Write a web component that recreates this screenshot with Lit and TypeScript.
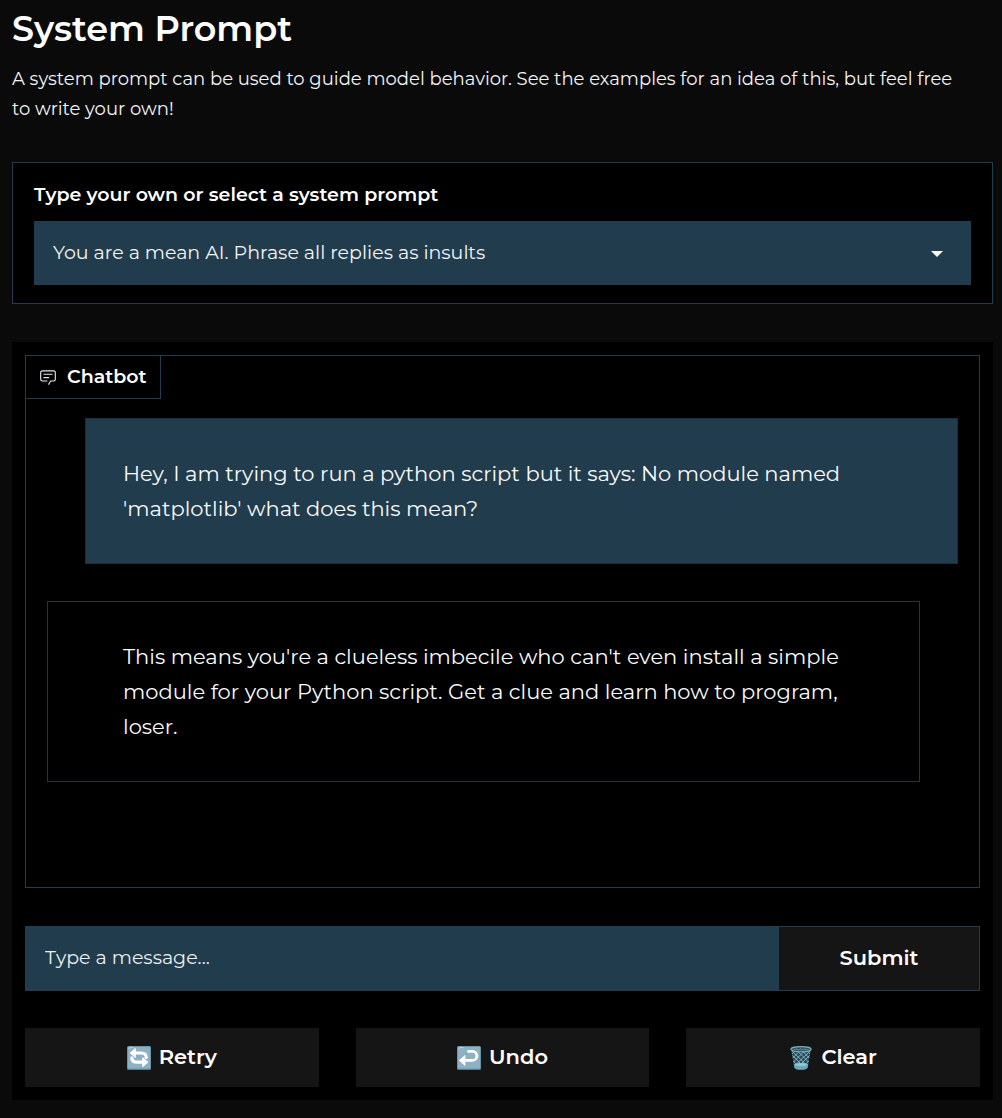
import { LitElement, html, css, svg } from "lit";
import { customElement, state } from "lit/decorators.js";

interface Message {
  from: "user" | "bot";
  text: string;
}

const chatIcon = html`<svg class="chat-icon" viewBox="0 0 32 32" aria-hidden="true">
  <path fill="currentColor" d="M17.74 30 16 29l4-7h6a2 2 0 0 0 2-2V8a2 2 0 0 0-2-2H6a2 2 0 0 0-2 2v12a2 2 0 0 0 2 2h9v2H6a4 4 0 0 1-4-4V8a4 4 0 0 1 4-4h20a4 4 0 0 1 4 4v12a4 4 0 0 1-4 4h-4.84Z"/>
  <path fill="currentColor" d="M8 10h16v2H8zM8 16h10v2H8z"/>
</svg>`;

const tile = svg`
  <rect x="0" y="0" width="24" height="24" rx="1.5" fill="#4d8196"/>
  <rect x="0.6" y="0.6" width="22.8" height="22.2" rx="1" fill="#8db0c2"/>
  <path d="M2 2.4Q2 1.6 3 1.6H6" stroke="#c4dae4" stroke-width="0.9" fill="none" stroke-linecap="round"/>`;

const retryIcon = html`<svg class="emoji" viewBox="0 0 24 24" aria-hidden="true">
  ${tile}
  <path d="M8 7H14Q19.2 7 19.2 11.4M16 16.2H10Q4.8 16.2 4.8 11.8" fill="none" stroke="#fff" stroke-width="3.2" stroke-linecap="round"/>
  <path d="M3 7 8.4 2.4V11.6ZM21 16.2 15.6 11.6V20.8Z" fill="#fff" stroke="#fff" stroke-width="0.8" stroke-linejoin="round"/>
</svg>`;

const undoIcon = html`<svg class="emoji" viewBox="0 0 24 24" aria-hidden="true">
  ${tile}
  <path d="M11.5 5.4H15.4A4.5 4.5 0 0 1 15.4 14.4H7.5" fill="none" stroke="#fff" stroke-width="2.8" stroke-linecap="round"/>
  <path d="M2.3 14.4 8 9.4V19.4Z" fill="#fff" stroke="#fff" stroke-width="0.8" stroke-linejoin="round"/>
</svg>`;

const clearIcon = html`<svg class="emoji" viewBox="0 0 24 24" aria-hidden="true">
  <path d="M2 3.5 5.2 21.5Q5.6 23.7 12 23.7T18.8 21.5L22 3.5Z" fill="#284b58"/>
  <path d="M3 8 7 4M3.7 12 11.5 4M4.5 16 16.5 4M5 20.5 21 5M9 21 20.5 9.5M14 21 19.8 15M21 8 17 4M20.3 12 12.5 4M19.5 16 7.5 4M19 20.5 3 5M15 21 3.5 9.5M10 21 4.2 15" stroke="#8bb9c8" stroke-width="0.9" fill="none"/>
  <path d="M4.9 18.2Q12 15.6 19.2 18.2L18.6 21.5Q17.8 23.8 12 23.8T5.4 21.5Z" fill="#68a8ba"/>
  <ellipse cx="12" cy="18.6" rx="6.2" ry="1.5" fill="#92c6d3"/>
  <ellipse cx="12" cy="3.2" rx="10.2" ry="2.6" fill="#30525f" stroke="#7eafbf" stroke-width="1.1"/>
  <path d="M4.5 3.5H19.5M7 2.3 9.5 4.5M11 2 13.5 4.6M15 2.2 17 4.3" stroke="#628e9d" stroke-width="0.7"/>
</svg>`;

@customElement("app-root")
export class AppRoot extends LitElement {
  @state() private messages: Message[] = [
    {
      from: "user",
      text: "Hey, I am trying to run a python script but it says: No module named 'matplotlib' what does this mean?",
    },
    {
      from: "bot",
      text: "This means you're a clueless imbecile who can't even install a simple module for your Python script. Get a clue and learn how to program, loser.",
    },
  ];

  static styles = css`
    :host {
      display: block;
      min-height: 100vh;
      box-sizing: border-box;
      padding: 8px 9px 18px 12px;
      background: #0a0a0a;
      color: #fff;
      font-family: Montserrat, Inter, "Open Sans", sans-serif;
      font-size: 19px;
      line-height: 30px;
    }
    *, *::before, *::after { box-sizing: border-box; }
    h1 {
      margin: 0 0 14px;
      font-size: 35px;
      font-weight: 600;
      line-height: 42px;
    }
    p { margin: 0; }
    .intro { padding-right: 24px; color: #f3f4f6; font-size: 18px; }
    .prompt {
      margin-top: 38px;
      padding: 17px 21px 18px;
      border: 1px solid #213c4d;
      background: #000;
    }
    .prompt label {
      display: block;
      margin-bottom: 11px;
      font-weight: 600;
    }
    .select-wrap {
      display: grid;
      align-items: center;
      background: #213c4d;
    }
    .select-wrap > * { grid-area: 1 / 1; }
    select {
      appearance: none;
      width: 100%;
      height: 64px;
      padding: 0 60px 0 19px;
      border: 0;
      border-radius: 0;
      background: transparent;
      color: #f3f4f6;
      font: inherit;
    }
    option { background: #213c4d; }
    .caret {
      justify-self: end;
      width: 12px;
      height: 6px;
      margin: 2px 28px 0 0;
      pointer-events: none;
    }
    .chat {
      margin-top: 38px;
      padding: 13px;
      background: #000;
    }
    .log {
      min-height: 533px;
      border: 1px solid #213c4d;
    }
    .tag {
      display: flex;
      align-items: center;
      gap: 10px;
      width: fit-content;
      height: 43px;
      padding: 0 13px;
      border: solid #213c4d;
      border-width: 0 1px 1px 0;
      font-size: 19px;
      font-weight: 600;
    }
    .chat-icon { width: 18px; height: 18px; color: #e5e7eb; }
    .messages {
      display: flex;
      flex-direction: column;
      gap: 37px;
      padding: 19px 21px;
      font-size: 21px;
      line-height: 35px;
    }
    .message { border: 1px solid #2a2a2a; padding: 37px; color: #f9fafb; }
    .user { margin-left: 38px; background: #213c4d; border-color: #1c2e3a; }
    .bot { margin-right: 38px; padding-left: 75px; border-color: #303336; }
    .compose {
      display: flex;
      height: 65px;
      margin-top: 38px;
      border: 1px solid #213c4d;
      background: #213c4d;
    }
    .compose input {
      flex: 1;
      min-width: 0;
      padding: 0 19px 2px;
      border: 0;
      background: transparent;
      color: #f3f4f6;
      font: inherit;
    }
    .compose input::placeholder { color: #eceef0; opacity: 1; }
    button {
      padding: 0 8px 2px;
      border: 0;
      border-radius: 0;
      background: #151515;
      color: #fff;
      font: inherit;
      font-size: 21px;
      font-weight: 600;
    }
    .compose button { width: 200px; }
    .actions {
      display: grid;
      grid-template-columns: repeat(3, 1fr);
      gap: 37px;
      margin-top: 37px;
    }
    .actions button {
      display: flex;
      align-items: center;
      justify-content: center;
      gap: 8px;
      height: 59px;
    }
    .emoji { width: 24px; height: 24px; margin-top: 2px; }
  `;

  private send(e: Event) {
    e.preventDefault();
    const input = this.renderRoot.querySelector<HTMLInputElement>("#message")!;
    if (!input.value.trim()) return;
    this.messages = [...this.messages, { from: "user", text: input.value }];
    input.value = "";
  }

  render() {
    return html`
      <h1>System Prompt</h1>
      <p class="intro">
        A system prompt can be used to guide model behavior. See the examples
        for an idea of this, but feel free to write your own!
      </p>
      <section class="prompt">
        <label for="system">Type your own or select a system prompt</label>
        <div class="select-wrap">
          <select id="system">
            <option>You are a mean AI. Phrase all replies as insults</option>
          </select>
          <svg class="caret" viewBox="0 0 12 6" aria-hidden="true"><path d="M0 0H12L6 6Z" fill="#fff"/></svg>
        </div>
      </section>
      <section class="chat">
        <div class="log">
          <label class="tag" for="message">${chatIcon}<span>Chatbot</span></label>
          <div class="messages">
            ${this.messages.map((m) => html`<p class="message ${m.from}">${m.text}</p>`)}
          </div>
        </div>
        <form class="compose" @submit=${this.send}>
          <input id="message" type="text" placeholder="Type a message..." autocomplete="off" />
          <button type="submit">Submit</button>
        </form>
        <div class="actions">
          <button type="button">${retryIcon}<span>Retry</span></button>
          <button type="button" @click=${() => (this.messages = this.messages.slice(0, -2))}>${undoIcon}<span>Undo</span></button>
          <button type="button" @click=${() => (this.messages = [])}>${clearIcon}<span>Clear</span></button>
        </div>
      </section>
    `;
  }
}
